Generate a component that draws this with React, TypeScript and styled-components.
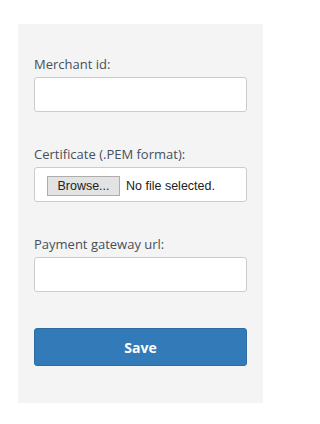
import React from 'react';
import styled, { createGlobalStyle } from 'styled-components';

const GlobalStyle = createGlobalStyle`
  html, body {
    margin: 0;
    padding: 0;
    background: #ffffff;
  }
  body {
    font-family: 'Open Sans', 'Liberation Sans', sans-serif;
  }
`;

const Page = styled.div`
  width: 280px;
  height: 424px;
  padding: 24px 17px 0 18px;
  box-sizing: border-box;
`;

const Panel = styled.form`
  background-color: #f4f4f4;
  padding: 31px 16px 37px;
  display: flex;
  flex-direction: column;
  gap: 33px;
`;

const Group = styled.div`
  display: flex;
  flex-direction: column;
`;

const Label = styled.label`
  font-size: 13px;
  line-height: 18px;
  color: #46505c;
  margin-bottom: 4px;
`;

const TextInput = styled.input`
  height: 35px;
  box-sizing: border-box;
  border: 1px solid #cccccc;
  border-radius: 3px;
  background: #ffffff;
  padding: 6px 12px;
  font-size: 14px;
  outline: none;
`;

const FileBox = styled.label`
  height: 35px;
  box-sizing: border-box;
  border: 1px solid #cccccc;
  border-radius: 3px;
  background: #ffffff;
  padding: 0 12px;
  display: flex;
  align-items: center;
  gap: 6px;
  font-family: 'Liberation Sans', Arial, sans-serif;
  font-size: 12.5px;
  color: #222222;
`;

const BrowseButton = styled.span`
  height: 20px;
  width: 73px;
  box-sizing: border-box;
  border: 1px solid #adadad;
  background: #e3e3e3;
  display: flex;
  align-items: center;
  justify-content: center;
  margin-top: 3px;
`;

const FileName = styled.span`
  margin-top: 3px;
`;

const SaveButton = styled.button`
  margin-top: 3px;
  height: 38px;
  border: 1px solid #2e6da4;
  border-radius: 3px;
  background-color: #327ab8;
  color: #ffffff;
  font-family: 'Open Sans', 'Liberation Sans', sans-serif;
  font-weight: 700;
  font-size: 14px;
  cursor: pointer;
`;

export default function App() {
  return (
    <>
      <GlobalStyle />
      <Page>
        <Panel onSubmit={(e) => e.preventDefault()}>
          <Group>
            <Label htmlFor="merchant">Merchant id:</Label>
            <TextInput id="merchant" type="text" />
          </Group>
          <Group>
            <Label>Certificate (.PEM format):</Label>
            <FileBox>
              <BrowseButton>Browse...</BrowseButton>
              <FileName>No file selected.</FileName>
            </FileBox>
          </Group>
          <Group>
            <Label htmlFor="gateway">Payment gateway url:</Label>
            <TextInput id="gateway" type="text" />
          </Group>
          <SaveButton type="submit">Save</SaveButton>
        </Panel>
      </Page>
    </>
  );
}
